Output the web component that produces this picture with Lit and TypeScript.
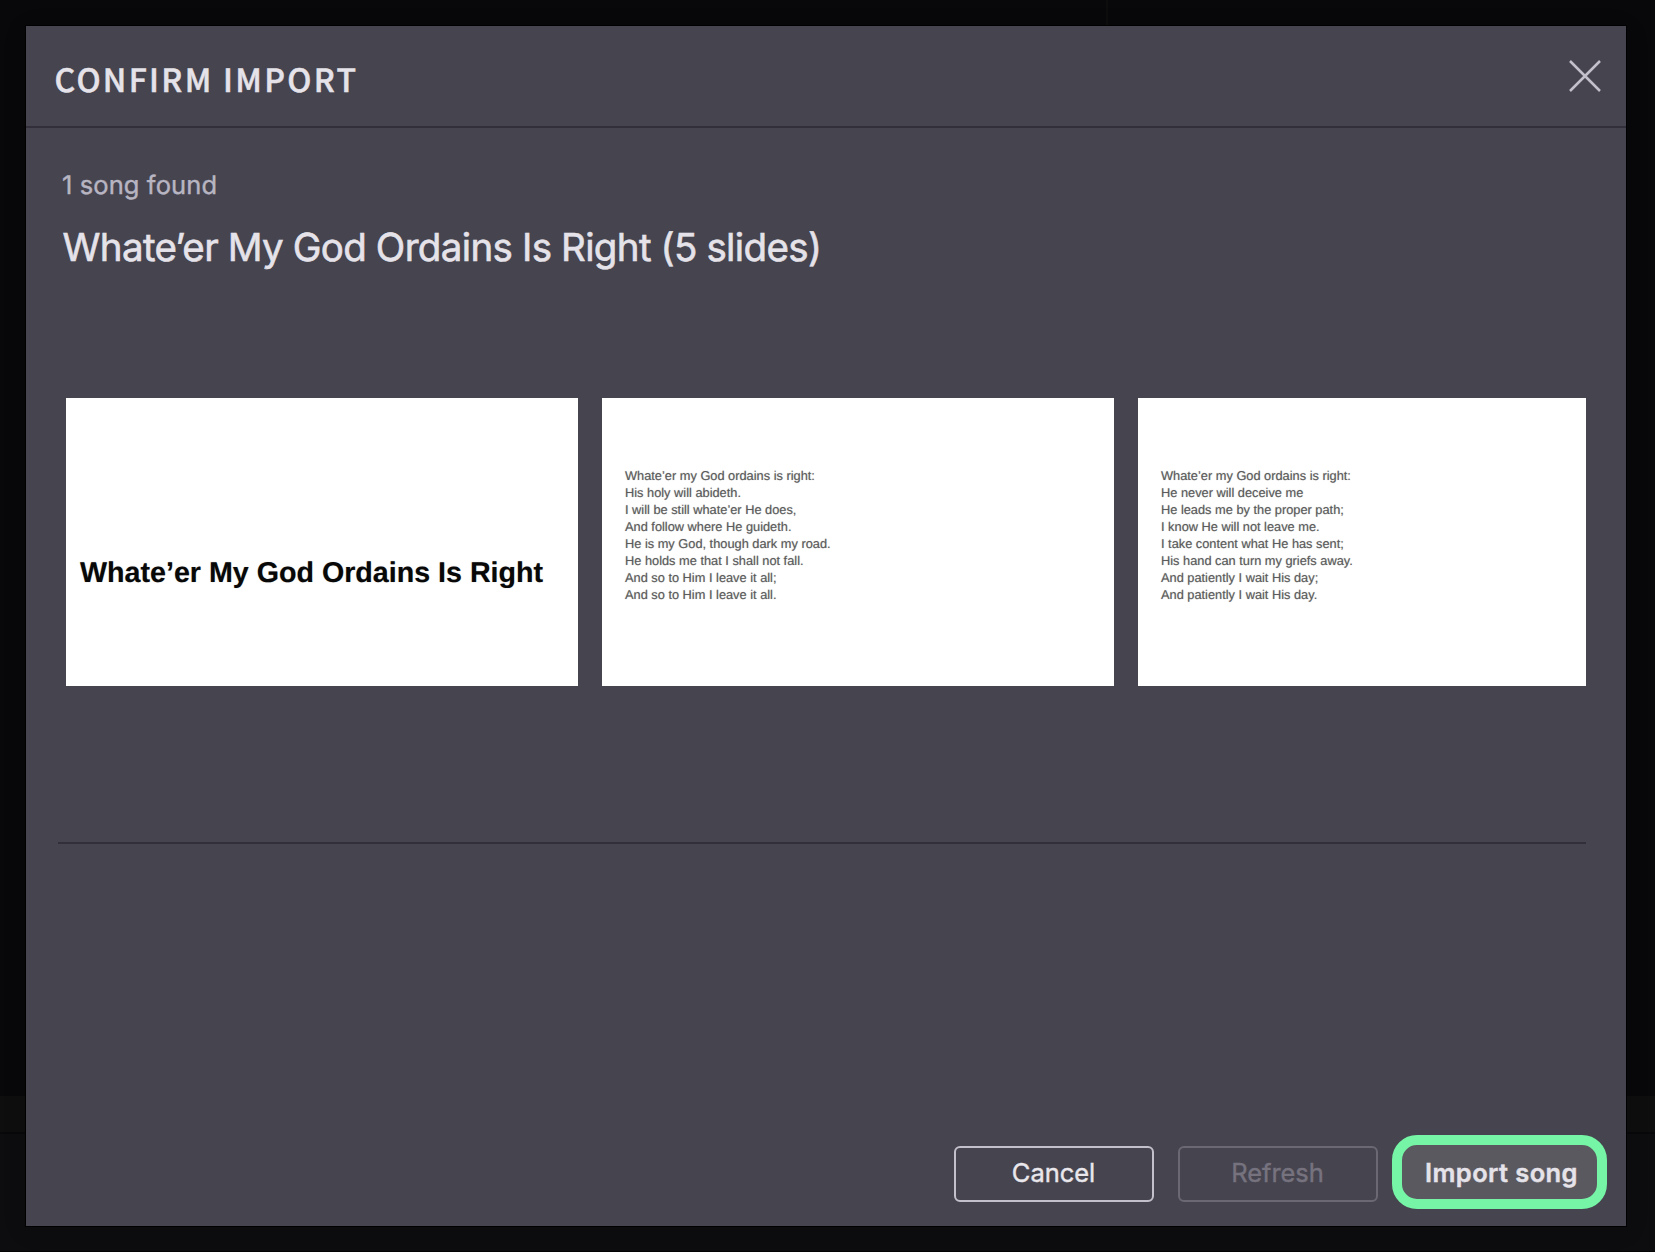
import { LitElement, html, css } from "lit";
import { customElement, property } from "lit/decorators.js";

interface Slide {
  title?: string;
  lines?: string[];
}

const slides: Slide[] = [
  { title: "Whate’er My God Ordains Is Right" },
  {
    lines: [
      "Whate’er my God ordains is right:",
      "His holy will abideth.",
      "I will be still whate’er He does,",
      "And follow where He guideth.",
      "He is my God, though dark my road.",
      "He holds me that I shall not fall.",
      "And so to Him I leave it all;",
      "And so to Him I leave it all.",
    ],
  },
  {
    lines: [
      "Whate’er my God ordains is right:",
      "He never will deceive me",
      "He leads me by the proper path;",
      "I know He will not leave me.",
      "I take content what He has sent;",
      "His hand can turn my griefs away.",
      "And patiently I wait His day;",
      "And patiently I wait His day.",
    ],
  },
];

@customElement("song-slide")
class SongSlide extends LitElement {
  @property({ attribute: false }) slide: Slide = {};

  static styles = css`
    :host {
      display: block;
      box-sizing: border-box;
      flex: none;
      width: 512px;
      height: 288px;
      background: #fff;
      font-family: "Liberation Sans", Arial, sans-serif;
      white-space: nowrap;
      text-rendering: geometricPrecision;
    }
    .title {
      padding: 158px 0 0 14px;
      font-size: 28.65px;
      font-weight: 700;
      line-height: 34px;
      color: #080808;
      text-shadow: 0 0 1px rgba(0, 0, 0, 0.4);
    }
    .lyrics {
      padding: 69px 0 0 23px;
      font-size: 12.8px;
      line-height: 17px;
      color: #5c5c5c;
      text-shadow: 0 0 1px rgba(0, 0, 0, 0.35);
    }
  `;

  render() {
    const { title, lines } = this.slide;
    return title
      ? html`<div class="title">${title}</div>`
      : html`<div class="lyrics">${lines?.map((l) => html`<div>${l}</div>`)}</div>`;
  }
}

@customElement("app-root")
class AppRoot extends LitElement {
  static styles = css`
    :host {
      display: block;
      position: relative;
      box-sizing: border-box;
      width: 1655px;
      height: 1252px;
      padding: 26px;
      overflow: hidden;
      background: #08080a;
      font-family: Inter, "Liberation Sans", sans-serif;
      text-rendering: geometricPrecision;
    }
    .backdrop {
      position: absolute;
      inset: 0;
      display: flex;
      flex-direction: column;
    }
    .back-main {
      box-sizing: border-box;
      width: 1108px;
      height: 1096px;
      border-right: 2px solid #0d0d0e;
    }
    .back-bar {
      height: 36px;
      background: #0e0e0f;
      border-bottom: 2px solid #08080a;
    }
    .back-foot {
      flex: 1;
      background: #0d0d0f;
      border-bottom: 1px solid #050405;
    }
    .dialog {
      position: relative;
      display: flex;
      flex-direction: column;
      box-sizing: border-box;
      width: 1600px;
      height: 1200px;
      background: #46444f;
      box-shadow: 0 0 0 1px #000, 0 4px 24px rgba(0, 0, 0, 0.1);
    }
    .header {
      display: flex;
      align-items: flex-start;
      justify-content: space-between;
      box-sizing: border-box;
      height: 102px;
      padding: 33px 25px 0 28.5px;
      border-bottom: 2px solid #322f3a;
    }
    h1 {
      margin: 0;
      font: 500 32px/40px "Noto Sans CJK JP", "Open Sans", sans-serif;
      letter-spacing: 2.33px;
      color: #e5e3e9;
      -webkit-text-stroke: 0.5px #e5e3e9;
    }
    .close {
      padding: 0;
      margin: 1px 0 0;
      border: 0;
      background: none;
      line-height: 0;
    }
    .close path {
      fill: none;
      stroke: #c3c0cb;
      stroke-width: 2.5;
    }
    .body {
      display: flex;
      flex-direction: column;
      height: 716px;
      box-sizing: border-box;
      margin: 0 40px 0 32px;
      padding-top: 42px;
      border-bottom: 2px solid #322f3a;
    }
    .found {
      margin-left: 4px;
      font-size: 25.5px;
      line-height: 32px;
      letter-spacing: 0.1px;
      color: #b8b5c2;
      -webkit-text-stroke: 0.4px #b8b5c2;
    }
    h2 {
      margin: 22px 0 0 4.5px;
      font-size: 38.5px;
      font-weight: 400;
      line-height: 48px;
      letter-spacing: -0.64px;
      word-spacing: -0.5px;
      white-space: nowrap;
      color: #e5e3e9;
      -webkit-text-stroke: 0.6px #e5e3e9;
    }
    .slides {
      display: flex;
      gap: 24px;
      margin: 126px 0 0 8px;
      overflow: hidden;
    }
    .footer {
      display: flex;
      align-items: center;
      justify-content: flex-end;
      height: 74px;
      margin-top: auto;
      padding: 0 19px 17px 0;
    }
    button {
      font-family: inherit;
    }
    .btn {
      box-sizing: border-box;
      width: 200px;
      height: 56px;
      margin: 4px 24px 0 0;
      padding: 0 1px 3px 0;
      border: 2px solid #c3c0cb;
      border-radius: 6px;
      background: none;
      color: #e9e7ec;
      font-size: 25.5px;
      letter-spacing: -0.05px;
      -webkit-text-stroke: 0.4px currentColor;
    }
    .disabled {
      margin-right: 14px;
      border-color: #6b6874;
      color: #76737f;
    }
    .primary {
      box-sizing: border-box;
      width: 215px;
      height: 74px;
      padding: 0 0 0 4px;
      border: 10px solid #75f5a5;
      border-radius: 25px;
      background: #5b5960;
      color: #e5e3e9;
      font-size: 25.5px;
      font-weight: 600;
      letter-spacing: 0.4px;
      white-space: nowrap;
      -webkit-text-stroke: 0.4px currentColor;
    }
  `;

  render() {
    return html`
      <div class="backdrop">
        <div class="back-main"></div>
        <div class="back-bar"></div>
        <div class="back-foot"></div>
      </div>
      <section class="dialog" role="dialog">
        <header class="header">
          <h1>CONFIRM IMPORT</h1>
          <button class="close">
            <svg width="32" height="32" viewBox="0 0 32 32">
              <path d="M1 1 31 31M31 1 1 31" />
            </svg>
          </button>
        </header>
        <main class="body">
          <div class="found">1 song found</div>
          <h2>Whate’er My God Ordains Is Right (5 slides)</h2>
          <div class="slides">
            ${slides.map((s) => html`<song-slide .slide=${s}></song-slide>`)}
          </div>
        </main>
        <footer class="footer">
          <button class="btn">Cancel</button>
          <button class="btn disabled">Refresh</button>
          <button class="primary">Import song</button>
        </footer>
      </section>
    `;
  }
}
